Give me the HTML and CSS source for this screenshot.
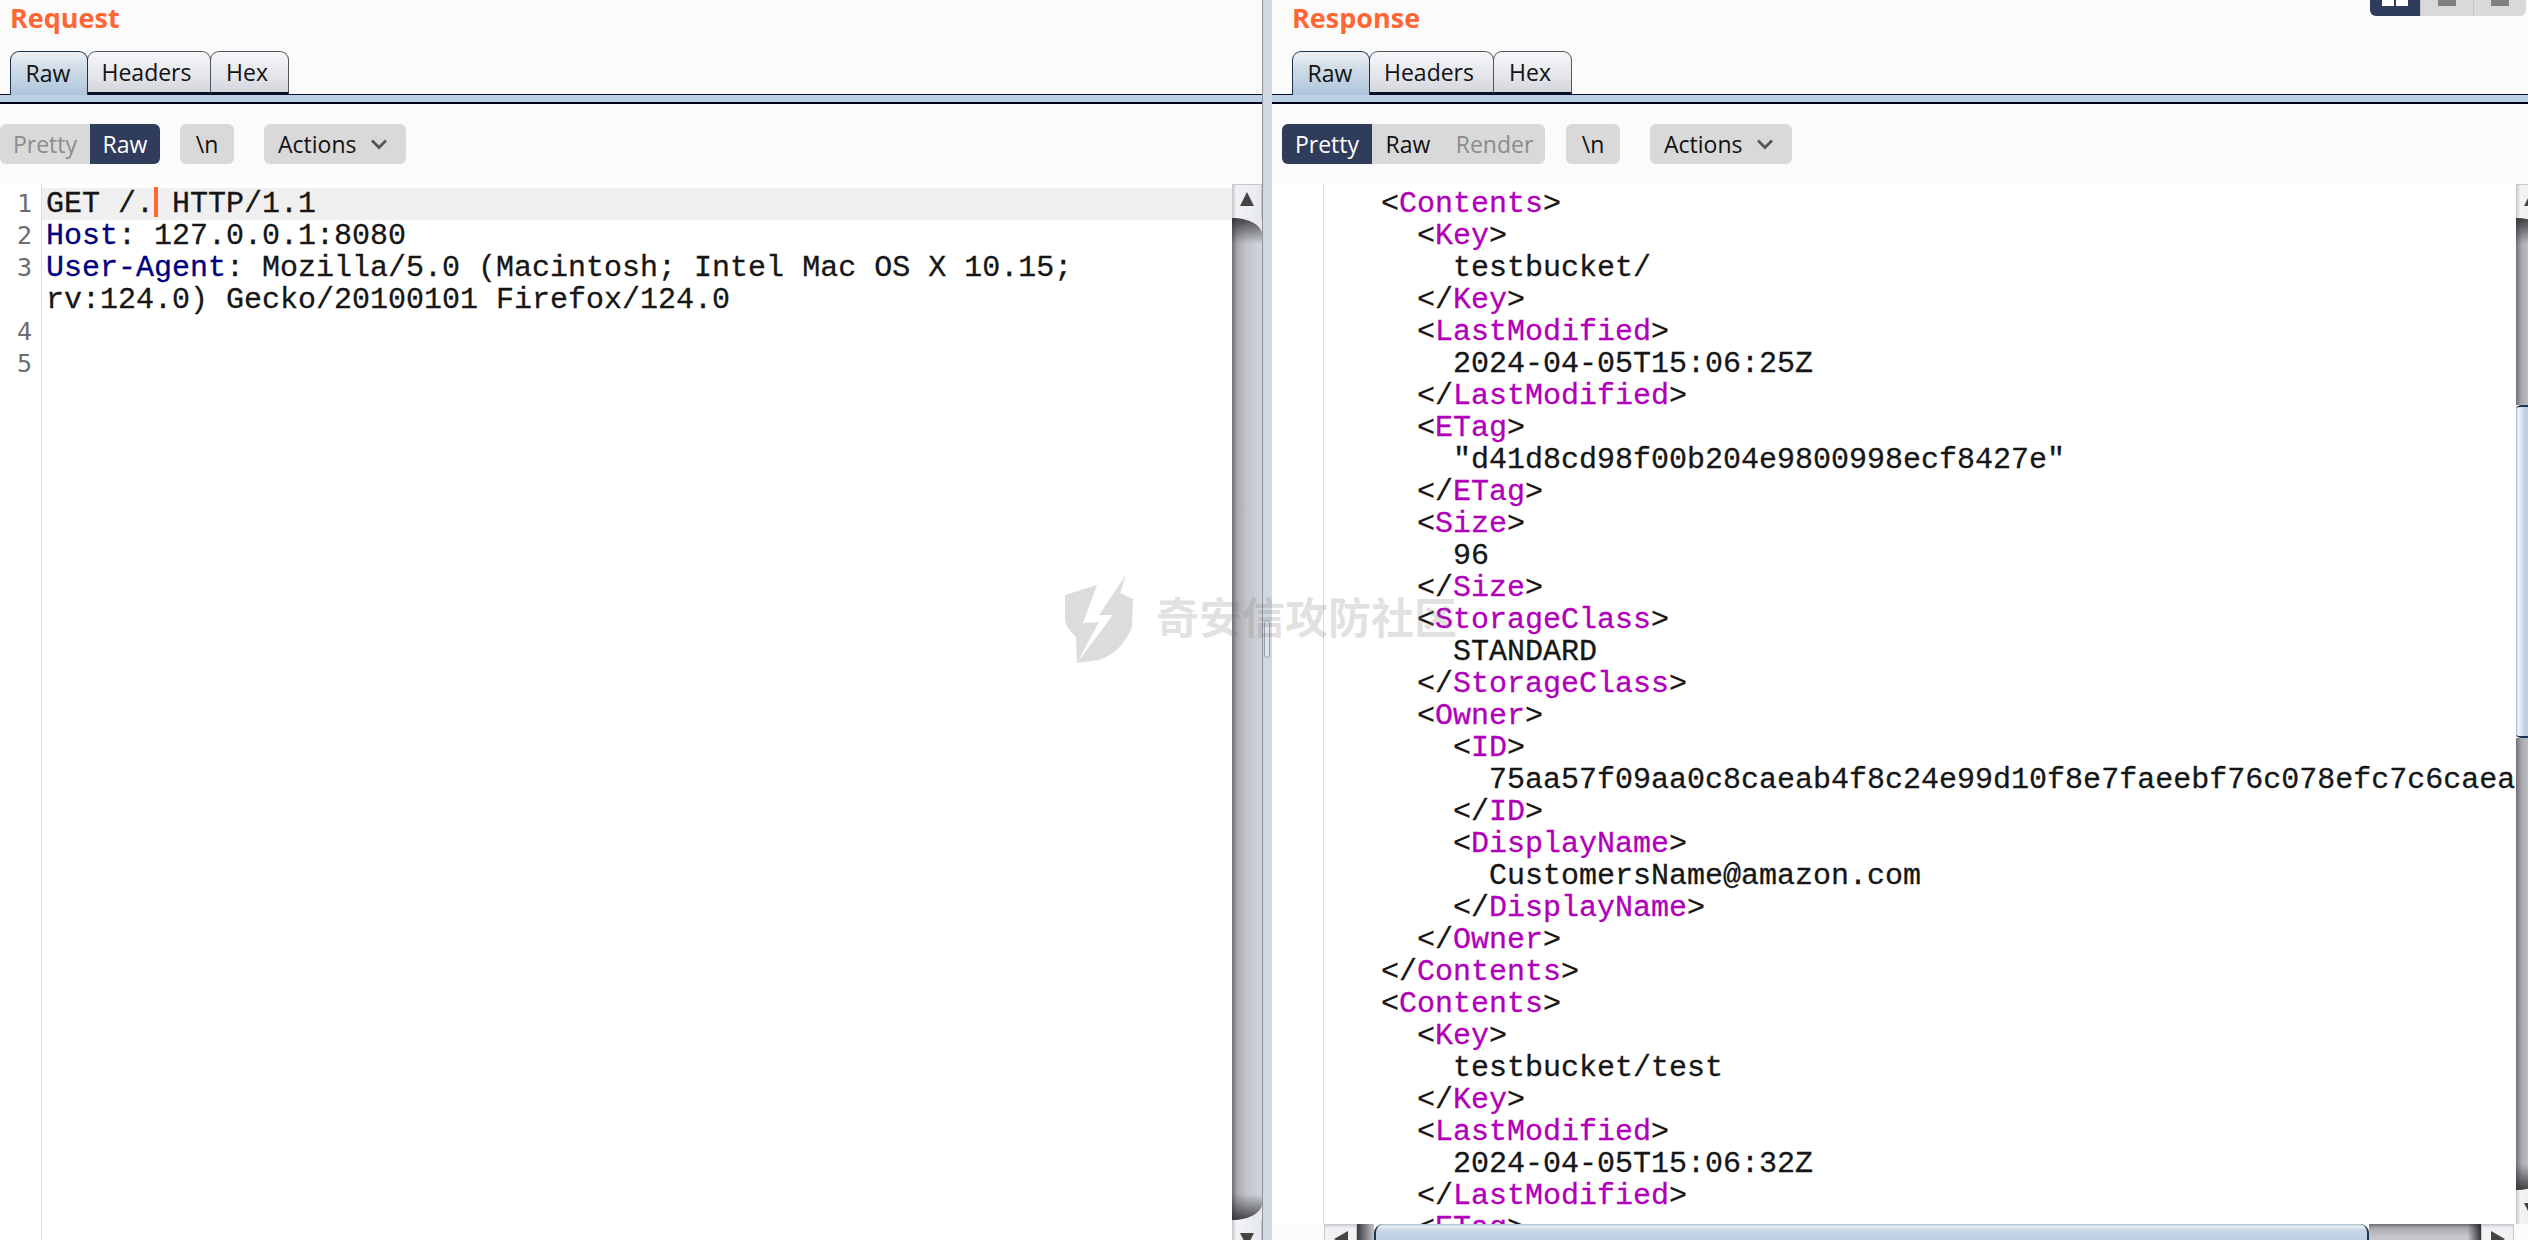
FILE: index.html
```html
<!DOCTYPE html>
<html lang="en">
<head>
<meta charset="utf-8">
<title>Request / Response</title>
<link rel="stylesheet" href="styles.css">
</head>
<body>
<div class="app">
  <section class="pane pane-left">
    <h2 class="title">Request</h2>
    <div class="tabs">
      <span class="tab tab-on tab-raw">Raw</span><span class="tab tab-headers">Headers</span><span class="tab tab-hex">Hex</span>
    </div>
    <div class="band"></div>
    <div class="toolbar">
      <div class="seg seg-req">
        <span class="seg-item off req-pretty">Pretty</span><span class="seg-item on req-raw">Raw</span>
      </div>
      <span class="btn btn-nl">\n</span>
      <span class="btn btn-actions">Actions<svg class="chev" viewBox="0 0 18 12"><path d="M2 2.5 L9 9.5 L16 2.5" fill="none" stroke="#555" stroke-width="2.8"/></svg></span>
    </div>
    <div class="editor">
      <div class="gutter nums"><div>1</div><div>2</div><div>3</div><div>&nbsp;</div><div>4</div><div>5</div></div>
      <pre class="code req-code"><div class="line-cur">GET /.<i class="caret"></i> HTTP/1.1</div><div><b class="hk">Host</b>: 127.0.0.1:8080</div><div><b class="hk">User-Agent</b>: Mozilla/5.0 (Macintosh; Intel Mac OS X 10.15;</div><div>rv:124.0) Gecko/20100101 Firefox/124.0</div></pre>
      <div class="vbar vbar-left">
        <div class="sb-btn sb-up"><i class="tri-up"></i></div>
        <div class="sb-track"></div>
        <div class="sb-btn sb-down"><i class="tri-down"></i></div>
      </div>
    </div>
  </section>

  <div class="split"><i class="grip"></i></div>

  <section class="pane pane-right">
    <h2 class="title">Response</h2>
    <div class="layout-btns">
      <span class="lb lb-on"><i></i><i></i></span><span class="lb"><i class="wide"></i></span><span class="lb"><i class="wide"></i></span>
    </div>
    <div class="tabs">
      <span class="tab tab-on tab-raw">Raw</span><span class="tab tab-headers">Headers</span><span class="tab tab-hex">Hex</span>
    </div>
    <div class="band"></div>
    <div class="toolbar toolbar-res">
      <div class="seg seg-res">
        <span class="seg-item on res-pretty">Pretty</span><span class="seg-item res-raw">Raw</span><span class="seg-item off res-render">Render</span>
      </div>
      <span class="btn btn-nl">\n</span>
      <span class="btn btn-actions">Actions<svg class="chev" viewBox="0 0 18 12"><path d="M2 2.5 L9 9.5 L16 2.5" fill="none" stroke="#555" stroke-width="2.8"/></svg></span>
    </div>
    <div class="editor-res">
      <div class="editor-body">
        <div class="gutter gutter-res"></div>
<pre class="code res-code">   &lt;<b>Contents</b>&gt;
     &lt;<b>Key</b>&gt;
       testbucket/
     &lt;/<b>Key</b>&gt;
     &lt;<b>LastModified</b>&gt;
       2024-04-05T15:06:25Z
     &lt;/<b>LastModified</b>&gt;
     &lt;<b>ETag</b>&gt;
       "d41d8cd98f00b204e9800998ecf8427e"
     &lt;/<b>ETag</b>&gt;
     &lt;<b>Size</b>&gt;
       96
     &lt;/<b>Size</b>&gt;
     &lt;<b>StorageClass</b>&gt;
       STANDARD
     &lt;/<b>StorageClass</b>&gt;
     &lt;<b>Owner</b>&gt;
       &lt;<b>ID</b>&gt;
         75aa57f09aa0c8caeab4f8c24e99d10f8e7faeebf76c078efc7c6caea54ba06a
       &lt;/<b>ID</b>&gt;
       &lt;<b>DisplayName</b>&gt;
         CustomersName@amazon.com
       &lt;/<b>DisplayName</b>&gt;
     &lt;/<b>Owner</b>&gt;
   &lt;/<b>Contents</b>&gt;
   &lt;<b>Contents</b>&gt;
     &lt;<b>Key</b>&gt;
       testbucket/test
     &lt;/<b>Key</b>&gt;
     &lt;<b>LastModified</b>&gt;
       2024-04-05T15:06:32Z
     &lt;/<b>LastModified</b>&gt;
     &lt;<b>ETag</b>&gt;</pre>
        <div class="vbar vbar-right">
          <div class="sb-btn sb-up"><i class="tri-up"></i></div>
          <div class="sb-track sb-seg1"></div>
          <div class="sb-thumb"></div>
          <div class="sb-track sb-seg2"></div>
          <div class="sb-btn sb-down"><i class="tri-down"></i></div>
        </div>
      </div>
      <div class="hbar">
        <div class="hb-btn"><i class="tri-left"></i></div>
        <div class="hb-track hb-seg1"></div>
        <div class="hb-thumb"></div>
        <div class="hb-track hb-seg2"></div>
        <div class="hb-btn"><i class="tri-right"></i></div>
      </div>
    </div>
  </section>

  <div class="watermark">
    <svg class="wm-shield" viewBox="0 0 68 88"><path d="M0 20 L32 10 L18 48 L34 47 L12 88 L11 62 C4 55 0 50 0 42 Z M61 0 L55 18 L68 24 L67 52 C60 70 48 80 34 85 L12 88 L48 40 L34 40 Z" fill="#dcdcdc"/></svg>
    <span class="wm-text">奇安信攻防社区</span>
  </div>
</div>
</body>
</html>
```
FILE: styles.css
```css
* { box-sizing: border-box; }
html, body { margin: 0; padding: 0; height: 100%; overflow: hidden; background: #fbfbfb; }
.app { position: relative; display: flex; width: 2528px; height: 1240px; overflow: hidden; font-family: "Open Sans", "Noto Sans", sans-serif; color: #111; }

.pane { position: relative; display: flex; flex-direction: column; height: 100%; min-width: 0; }
.pane-left { width: 1262px; flex: none; }
.pane-right { flex: 1; }

.title { margin: 0; height: 52px; padding: 1px 0 0 10px; font-size: 27px; line-height: 34px; font-weight: 700; color: #ff6633; }
.pane-right .title { padding-left: 20px; }

.tabs { display: flex; height: 43px; padding-left: 10px; align-items: flex-end; border-bottom: 1px solid #0a1028; }
.pane-right .tabs { padding-left: 20px; }
.tab { display: flex; align-items: center; justify-content: center; height: 43px; font-size: 23px; padding: 0 5px 1px 0; border: 1.5px solid #50545e; border-bottom: 2px solid #0a1028; border-radius: 9px 9px 0 0; background: linear-gradient(#f6f7f9, #e6e7ec 55%, #d4d6de); margin-right: -1px; }
.tab-on { border-color: #1d3350; border-bottom: none; background: linear-gradient(#eef1f4, #d2dde7 35%, #aec6dc); position: relative; z-index: 1; height: 44px; margin-bottom: -1px; padding-right: 2px; }
.pane-left .tab-raw { width: 78px; }
.pane-left .tab-headers { width: 124px; }
.pane-left .tab-hex { width: 79px; }
.pane-right .tab-raw { width: 78px; }
.pane-right .tab-headers { width: 125px; }
.pane-right .tab-hex { width: 79px; }

.band { height: 9px; flex: none; background: #bcd0e4; border-bottom: 2px solid #000018; }

.toolbar { display: flex; align-items: center; height: 80px; flex: none; padding: 20px 0; }
.toolbar-res { padding-left: 10px; }
.seg { display: flex; height: 40px; border-radius: 6px; overflow: hidden; background: #d9d9d9; }
.seg-item { display: flex; align-items: center; justify-content: center; font-size: 23px; height: 40px; }
.seg-item.on { background: #2f3c5c; color: #fff; }
.seg-item.off { color: #8c8c8c; }
.seg-req { width: 160px; }
.req-pretty { width: 90px; }
.req-raw { width: 70px; }
.seg-res { width: 263px; }
.res-pretty { width: 90px; }
.res-raw { width: 66px; padding-left: 6px; }
.res-render { width: 107px; padding-left: 6px; }
.btn { display: flex; align-items: center; justify-content: center; height: 40px; border-radius: 6px; background: #d9d9d9; font-size: 23px; }
.btn-nl { width: 54px; margin-left: 20px; }
.btn-actions { width: 142px; margin-left: 30px; justify-content: flex-start; padding-left: 14px; }
.toolbar-res .btn-nl { margin-left: 21px; }
.toolbar-res .btn-actions { margin-left: 30px; }
.chev { width: 18px; height: 12px; margin-left: 14px; }

.editor { flex: 1; display: flex; background: #fff; min-height: 0; overflow: hidden; }
.gutter { flex: none; width: 42px; border-right: 1px solid #dcdcdc; background: #fff; }
.nums { padding-top: 4px; font-family: "DejaVu Sans Mono", monospace; font-size: 25px; line-height: 32px; color: #6e6e6e; text-align: right; padding-right: 9px; }
.code { flex: 1; min-width: 0; margin: 0; padding: 4px 0 0 4px; overflow: hidden; font-family: "Liberation Mono", monospace; font-size: 30px; line-height: 32px; color: #161616; background: #fff; -webkit-text-stroke: .3px currentColor; }
.line-cur { position: relative; background: #f0f0f0; margin-left: -4px; padding-left: 4px; height: 32px; }
.caret { display: inline-block; width: 4px; height: 30px; margin: 0 -4px 0 0; background: #ff6633; vertical-align: top; position: relative; top: -1px; }
.hk { font-weight: 400; color: #000080; }

.editor-res { flex: 1; display: flex; flex-direction: column; min-height: 0; }
.editor-body { flex: 1; display: flex; min-height: 0; background: #fff; }
.gutter-res { width: 52px; }
.res-code { padding-left: 3px; }
.res-code b { font-weight: 400; color: #b000b8; }

.vbar { flex: none; display: flex; flex-direction: column; }
.vbar-left { width: 30px; }
.vbar-right { width: 12px; overflow: hidden; }
.vbar-right > * { width: 30px; }
.sb-btn { flex: none; height: 34px; background: linear-gradient(90deg, #d0d0d4, #f2f3f5 12%, #e8e9ed); border: 1px solid #c8c8cc; border-bottom: 0; display: flex; align-items: center; justify-content: center; }
.sb-down { margin-bottom: -14px; border-top: 0; }
.vbar-right .sb-down { margin-bottom: 0; }
.sb-track { flex: 1; background: linear-gradient(90deg, #6f6f73, #a9aaae 18%, #c4c5ca 50%, #d2d5de); position: relative; overflow: hidden; }
.sb-track::before, .sb-track::after { content: ""; position: absolute; left: 0; right: 0; height: 26px; }
.sb-track::before { top: 0; border-radius: 0 30px 0 0 / 0 16px 0 0; background: linear-gradient(rgba(35,35,38,.8), rgba(35,35,38,0)); box-shadow: 12px -12px 0 12px #e8e9ed; }
.sb-track::after { bottom: 0; border-radius: 0 0 30px 0 / 0 0 16px 0; background: linear-gradient(rgba(35,35,38,0), rgba(35,35,38,.8)); box-shadow: 12px 12px 0 12px #e8e9ed; }
.sb-seg1 { flex: none; height: 187px; }
.sb-seg1::after, .sb-seg2::before { display: none; }
.sb-thumb { flex: none; height: 333px; border-radius: 6px / 3px; border-top: 2px solid #1d3350; border-bottom: 2px solid #1d3350; background: linear-gradient(90deg, #a8bed2, #f0f4f8 8%, #dfe8f0 14%, #bcd0e2 30%, #aec6dc); }
.tri-up { width: 0; height: 0; border-left: 7px solid transparent; border-right: 7px solid transparent; border-bottom: 14px solid #444; margin-top: -5px; }
.tri-down { width: 0; height: 0; border-left: 7px solid transparent; border-right: 7px solid transparent; border-top: 14px solid #444; margin-top: 5px; }

.hbar { flex: none; height: 16px; display: flex; padding-left: 52px; padding-right: 14px; background: #fbfbfb; overflow: hidden; }
.hb-btn { flex: none; width: 33px; height: 30px; background: linear-gradient(#d4d5d8, #f0f1f3 12%, #f4f4f4); border: 1px solid #c8c8cc; display: flex; align-items: center; justify-content: center; }
.hb-track { height: 30px; background: linear-gradient(#6f6f73, #a9aaae 14%, #c4c5ca 40%, #d2d5de); }
.hb-seg1 { width: 17px; flex: none; background: linear-gradient(90deg, #3a3a3d, #8a8b8f 60%, #c4c5ca); }
.hb-seg2 { flex: 1; background: linear-gradient(90deg, rgba(35,35,38,0) 88%, rgba(35,35,38,.9)), linear-gradient(#6f6f73, #a9aaae 14%, #c4c5ca 40%, #d2d5de); }
.hb-thumb { flex: none; width: 995px; height: 30px; border-radius: 9px; border-left: 2px solid #1d3350; border-right: 2px solid #1d3350; background: linear-gradient(#a8bed2, #e8eef4 8%, #c6d6e6 22%, #aec6dc); }
.tri-left { width: 0; height: 0; border-top: 8px solid transparent; border-bottom: 8px solid transparent; border-right: 14px solid #444; }
.tri-right { width: 0; height: 0; border-top: 8px solid transparent; border-bottom: 8px solid transparent; border-left: 14px solid #444; }

.split { position: relative; flex: none; width: 10px; background: #d2d8e2; border-left: 1px solid #8e929c; }
.grip { position: absolute; left: 1px; top: 620px; width: 6px; height: 38px; border: 1px solid #9a9ea8; border-radius: 3px; background: #dfe3ea; }

.layout-btns { position: absolute; top: -8px; right: 2px; display: flex; height: 24px; border-radius: 0 0 6px 6px; overflow: hidden; background: #d9d9d9; }
.lb { display: flex; justify-content: center; gap: 2px; align-items: flex-start; width: 53px; height: 24px; padding-top: 8px; border-left: 1px solid #c6c6c6; }
.lb i { display: block; width: 12px; height: 6px; background: #fff; }
.lb i.wide { width: 18px; background: #7f7f7f; }
.lb-on { width: 50px; background: #2f3c5c; border-left: 0; }

.watermark { position: absolute; left: 1065px; top: 575px; display: flex; align-items: center; gap: 23px; pointer-events: none; }
.wm-shield { width: 68px; height: 88px; }
.wm-text { font-family: "Noto Sans CJK SC", sans-serif; font-size: 43px; font-weight: 700; color: rgba(120,120,120,.22); line-height: 44px; margin-top: -8px; white-space: nowrap; }
```
